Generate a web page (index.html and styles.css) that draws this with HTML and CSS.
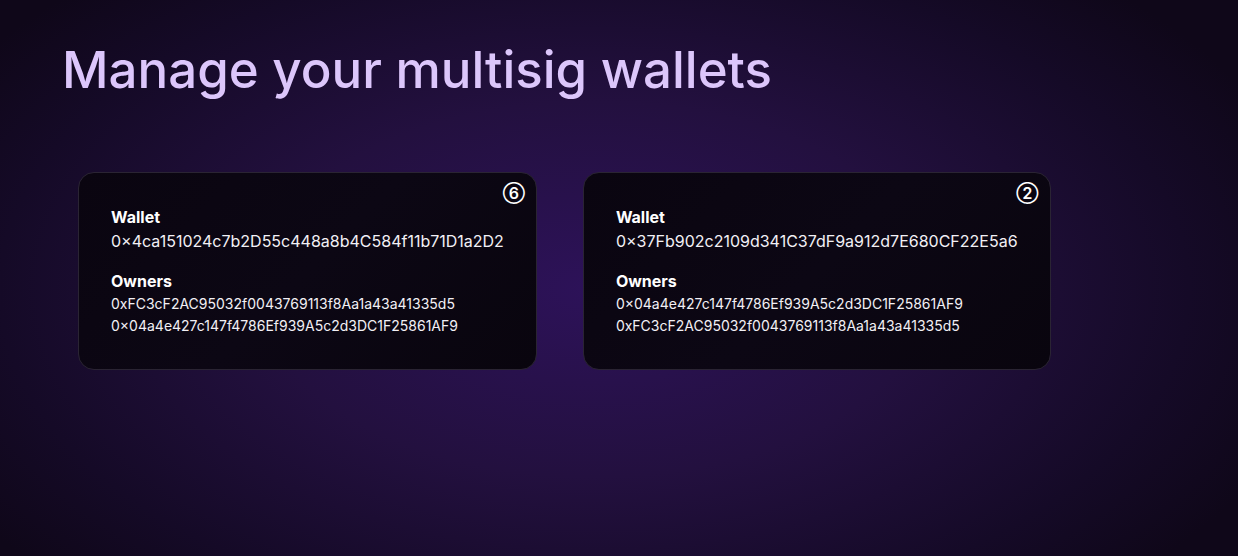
FILE: index.html
```html
<!DOCTYPE html>
<html>
<head>
<meta charset="utf-8">
<link rel="stylesheet" href="styles.css">
</head>
<body>
<main class="page">
  <h1 class="title">Manage your multisig wallets</h1>
  <section class="wallets">
    <article class="card">
      <span class="badge">⑥</span>
      <h2 class="label">Wallet</h2>
      <p class="address">0×4ca151024c7b2D55c448a8b4C584f11b71D1a2D2</p>
      <h2 class="label owners-label">Owners</h2>
      <ul class="owners">
        <li>0xFC3cF2AC95032f0043769113f8Aa1a43a41335d5</li>
        <li>0×04a4e427c147f4786Ef939A5c2d3DC1F25861AF9</li>
      </ul>
    </article>
    <article class="card">
      <span class="badge">②</span>
      <h2 class="label">Wallet</h2>
      <p class="address">0×37Fb902c2109d341C37dF9a912d7E680CF22E5a6</p>
      <h2 class="label owners-label">Owners</h2>
      <ul class="owners">
        <li>0×04a4e427c147f4786Ef939A5c2d3DC1F25861AF9</li>
        <li>0xFC3cF2AC95032f0043769113f8Aa1a43a41335d5</li>
      </ul>
    </article>
  </section>
</main>
</body>
</html>
```

FILE: styles.css
```css
* { box-sizing: border-box; }
html, body {
  margin: 0;
  height: 100%;
}
body {
  font-family: Inter, "Noto Sans", sans-serif;
  color: #ffffff;
  background: radial-gradient(ellipse 60% 75% at 48% 52%, #2d1259 0%, #23103f 45%, #150a27 80%, #0f0719 100%);
  min-height: 556px;
  overflow: hidden;
}
.page {
  padding: 38px 62px;
}
.title {
  margin: 0;
  font-size: 51px;
  font-weight: 500;
  line-height: 64px;
  color: #dcc6fb;
}
.wallets {
  display: flex;
  align-items: flex-start;
  gap: 46px;
  margin: 70px 0 0 16px;
}
.card {
  position: relative;
  padding: 32px;
  border: 1px solid #2a2433;
  border-radius: 16px;
  background: linear-gradient(135deg, #0a0510 0%, #0c0714 50%, #09050e 100%);
}
.badge {
  position: absolute;
  top: 10px;
  right: 11px;
  font-size: 16px;
  font-weight: 600;
  line-height: 20px;
  color: #ffffff;
}
.label {
  margin: 0;
  font-size: 16px;
  font-weight: 700;
  line-height: 24px;
}
.address {
  margin: 0;
  font-size: 16px;
  line-height: 24px;
  color: #f2f0f5;
}
.owners-label {
  margin-top: 16px;
}
.owners {
  list-style: none;
  margin: 0;
  padding: 0;
  font-size: 14px;
  line-height: 22px;
  color: #f2f0f5;
}
```
